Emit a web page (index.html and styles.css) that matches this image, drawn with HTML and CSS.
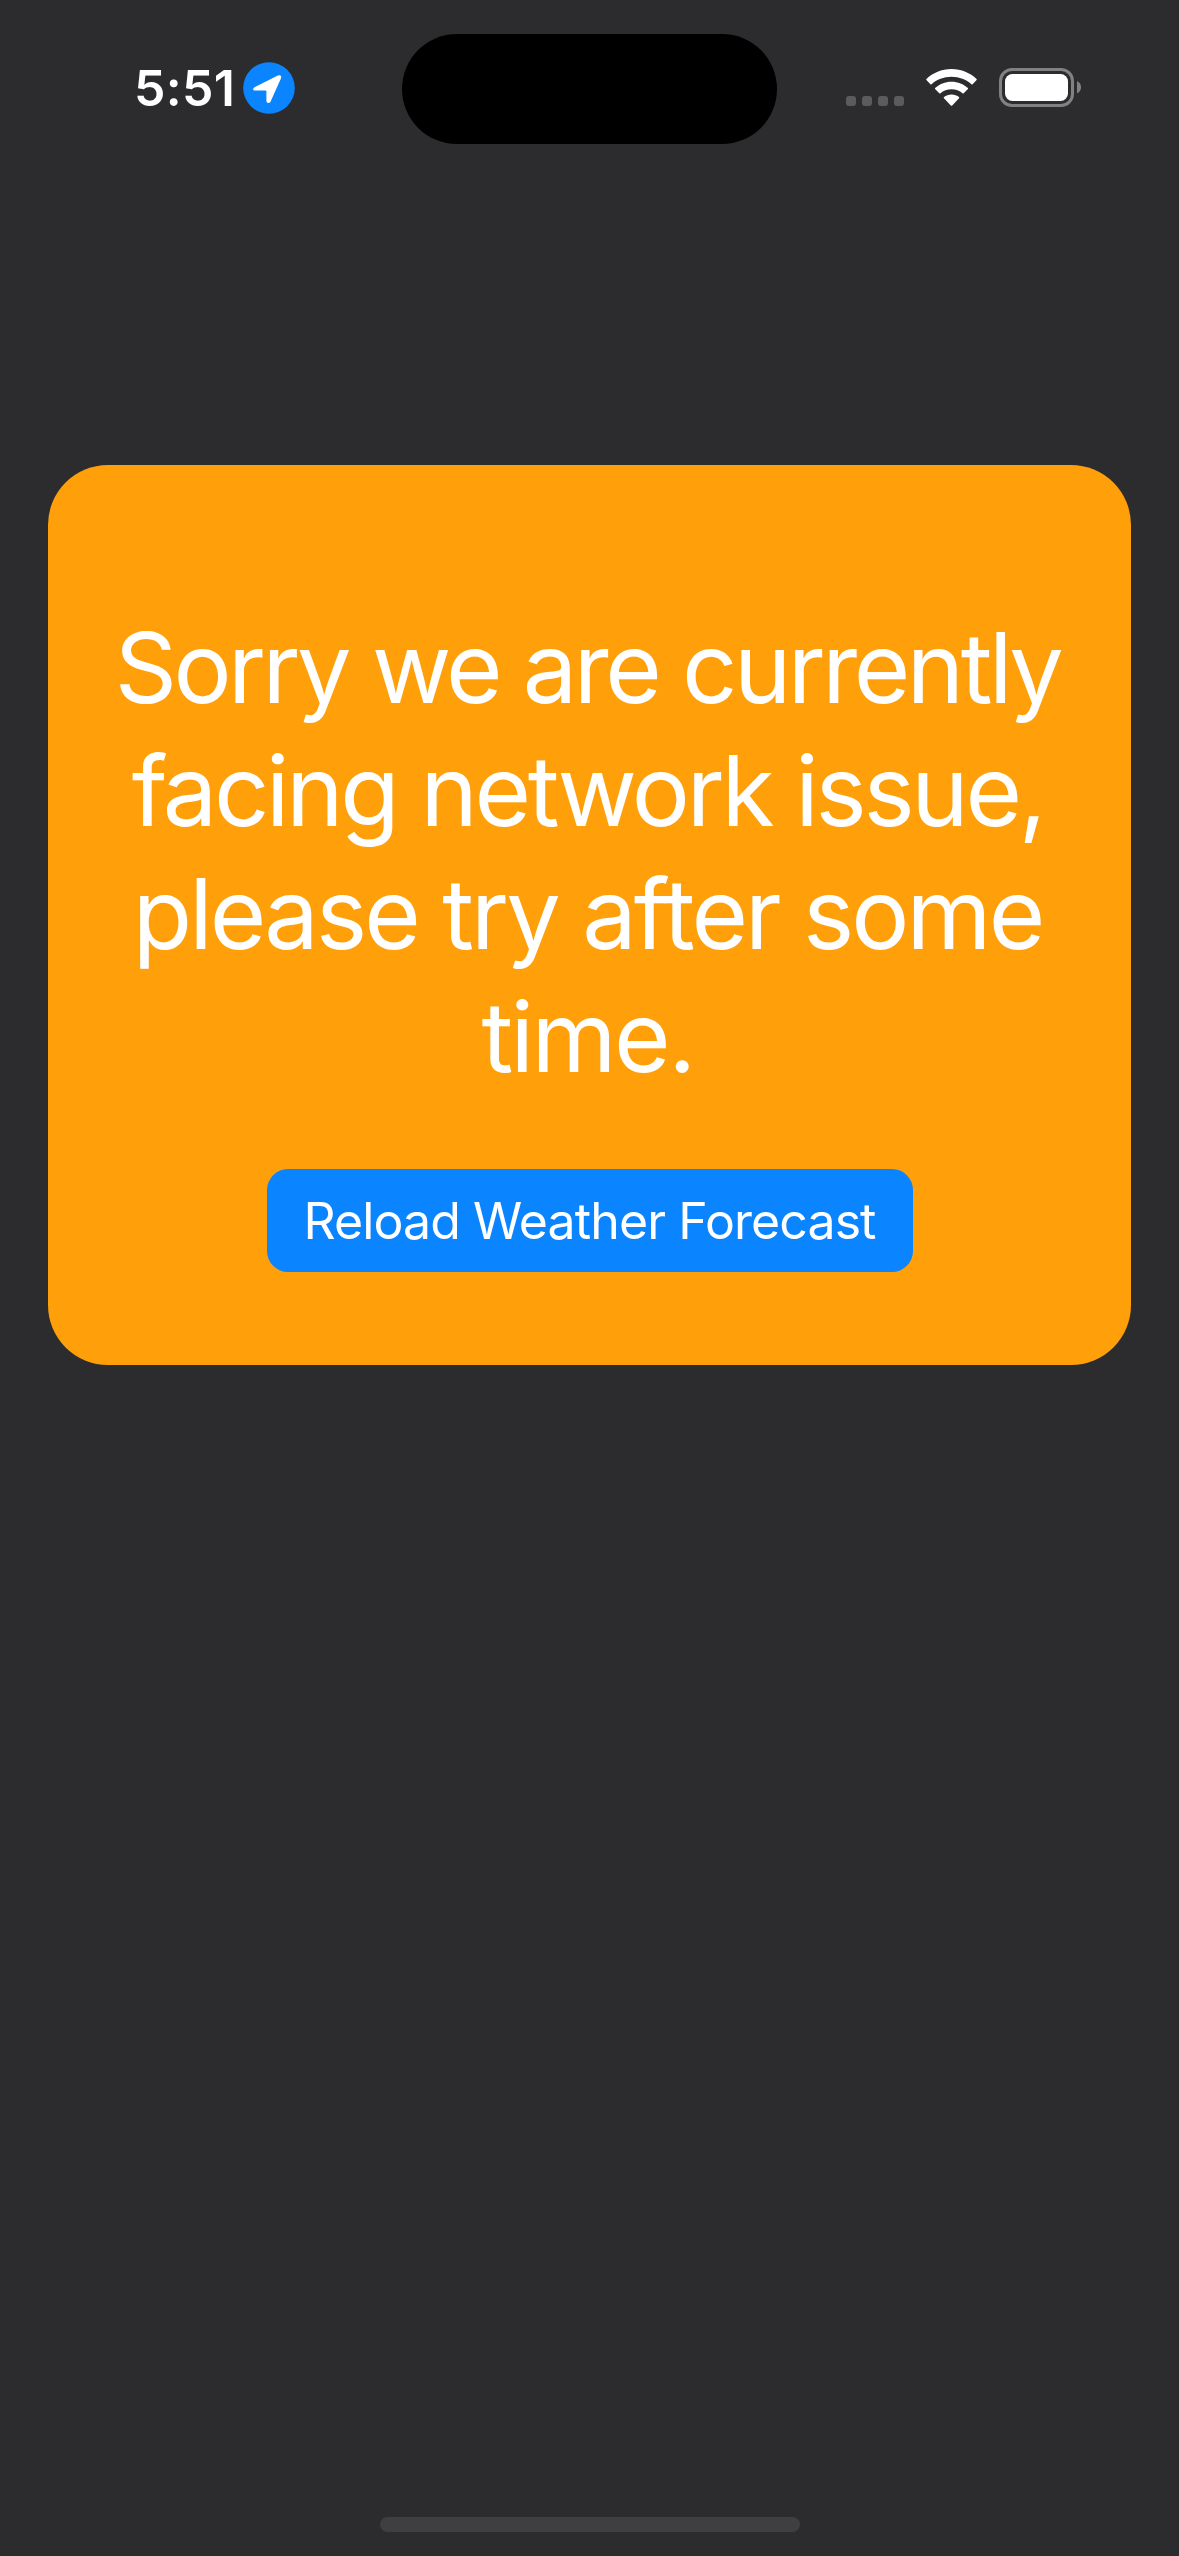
FILE: index.html
```html
<!DOCTYPE html>
<html lang="en">
<head>
  <meta charset="utf-8">
  <title>Weather Forecast</title>
  <link rel="stylesheet" href="styles.css">
</head>
<body>
  <div class="screen">
    <header class="status-bar">
      <div class="status-left">
        <span class="time">5:51</span>
        <svg class="location" viewBox="0 0 52 52" aria-hidden="true">
          <circle cx="26" cy="26" r="25.8" fill="#0a84ff"/>
          <path d="M12 25L34.800 13.600C37.500 12.300 39 14 37.800 16.700L27.600 39.500C26.700 41.700 23.400 41.400 23.400 38.800V29.600Q23.400 28.600 22.400 28.600H12.200C9.500 28.600 9.500 26.200 12 25Z" fill="#fff"/>
        </svg>
      </div>
      <div class="island"></div>
      <div class="status-right">
        <div class="signal"><i></i><i></i><i></i><i></i></div>
        <svg class="wifi" viewBox="0 0 51 37" aria-hidden="true">
          <g fill="#fff">
            <path d="M25.500 0C35.400 0 44.200 3.800 50.600 10.100Q51 10.600 50.600 11.100L46.600 15.300Q46 15.800 45.400 15.300C40.300 10.600 33.300 7.800 25.500 7.800S10.700 10.600 5.600 15.300Q5 15.800 4.400 15.300L.4 11.100Q0 10.600.4 10.100C6.800 3.800 15.600 0 25.500 0Z"/>
            <path d="M25.500 12.700C31.900 12.700 37.600 15.100 41.900 19Q42.300 19.500 41.900 20L37.700 24.300Q37.100 24.800 36.500 24.300C33.600 21.700 29.800 20.200 25.500 20.200S17.400 21.700 14.500 24.300Q13.900 24.800 13.300 24.300L9.100 20Q8.700 19.500 9.100 19C13.400 15.100 19.100 12.700 25.500 12.700Z"/>
            <path d="M25.500 25.500C28.500 25.500 31 26.500 33 28.100Q33.500 28.600 33 29.200L26.200 36.400Q25.500 37.100 24.800 36.400L18 29.200Q17.500 28.600 18 28.100C20 26.500 22.500 25.500 25.500 25.500Z"/>
          </g>
        </svg>
        <svg class="battery" viewBox="0 0 82 39" aria-hidden="true">
          <rect x="1.500" y="1.500" width="72" height="36" rx="11.500" fill="none" stroke="#818182" stroke-width="3"/>
          <rect x="6" y="6" width="63" height="27" rx="7.500" fill="#fff"/>
          <path d="M78 13Q82 15 82 19.300T78 25.500Z" fill="#818182"/>
        </svg>
      </div>
    </header>
    <main class="content">
      <section class="card">
        <p class="message">
          <span class="line tightest">Sorry we are currently</span>
          <span class="line tighter">facing network issue,</span>
          <span class="line tight">please try after some</span>
          <span class="line snug">time.</span>
        </p>
        <button class="reload" type="button">Reload Weather Forecast</button>
      </section>
    </main>
    <div class="home-indicator"></div>
  </div>
</body>
</html>
```

FILE: styles.css
```css
* {
  box-sizing: border-box;
}

body {
  margin: 0;
  background: #2c2c2e;
  color: #fff;
  font-family: Inter, "Liberation Sans", sans-serif;
}

.screen {
  display: flex;
  flex-direction: column;
  align-items: center;
  width: 1179px;
  height: 2556px;
  padding-bottom: 24px;
  overflow: hidden;
}

.status-bar {
  display: grid;
  grid-template-columns: 402px 375px 402px;
  align-items: center;
  width: 100%;
  height: 176px;
}

.status-left {
  display: flex;
  align-items: center;
  gap: 10px;
  padding-left: 134px;
}

.time {
  width: 99px;
  font-size: 50px;
  font-weight: 600;
  line-height: 60px;
  letter-spacing: 0.3px;
  white-space: nowrap;
}

.location {
  width: 52px;
  height: 52px;
}

.island {
  height: 110px;
  margin-top: 2px;
  border-radius: 55px;
  background: #000;
}

.status-right {
  display: flex;
  align-items: center;
  padding: 0 0 1px 69px;
}

.signal {
  display: flex;
  gap: 6px;
  margin: 27px 22px 0 0;
}

.signal i {
  width: 10px;
  height: 10px;
  border-radius: 3px;
  background: #5b5b5d;
}

.wifi {
  width: 51px;
  height: 37px;
  margin-right: 22px;
}

.battery {
  width: 82px;
  height: 39px;
}

.content {
  flex: 1;
  width: 100%;
  padding: 289px 48px 0;
}

.card {
  display: flex;
  flex-direction: column;
  align-items: center;
  height: 900px;
  padding-top: 141px;
  border-radius: 60px;
  background: #ff9f0a;
}

.message {
  margin: 0;
  padding-right: 4px;
  font-size: 97px;
  font-weight: 430;
  line-height: 123px;
  text-align: center;
  white-space: nowrap;
}

.line {
  display: block;
}

.tightest {
  letter-spacing: -3.5px;
}

.tighter {
  letter-spacing: -3.3px;
}

.tight {
  letter-spacing: -2.9px;
}

.snug {
  letter-spacing: -2.5px;
}

.reload {
  width: 646px;
  height: 103px;
  margin-top: 71px;
  padding: 0;
  border: 0;
  border-radius: 21px;
  background: #0a84ff;
  color: #fff;
  font: 400 50px/60px Inter, "Liberation Sans", sans-serif;
  letter-spacing: -0.9px;
  white-space: nowrap;
}

.home-indicator {
  width: 420px;
  height: 15px;
  border-radius: 8px;
  background: #3f3f3f;
}
```
